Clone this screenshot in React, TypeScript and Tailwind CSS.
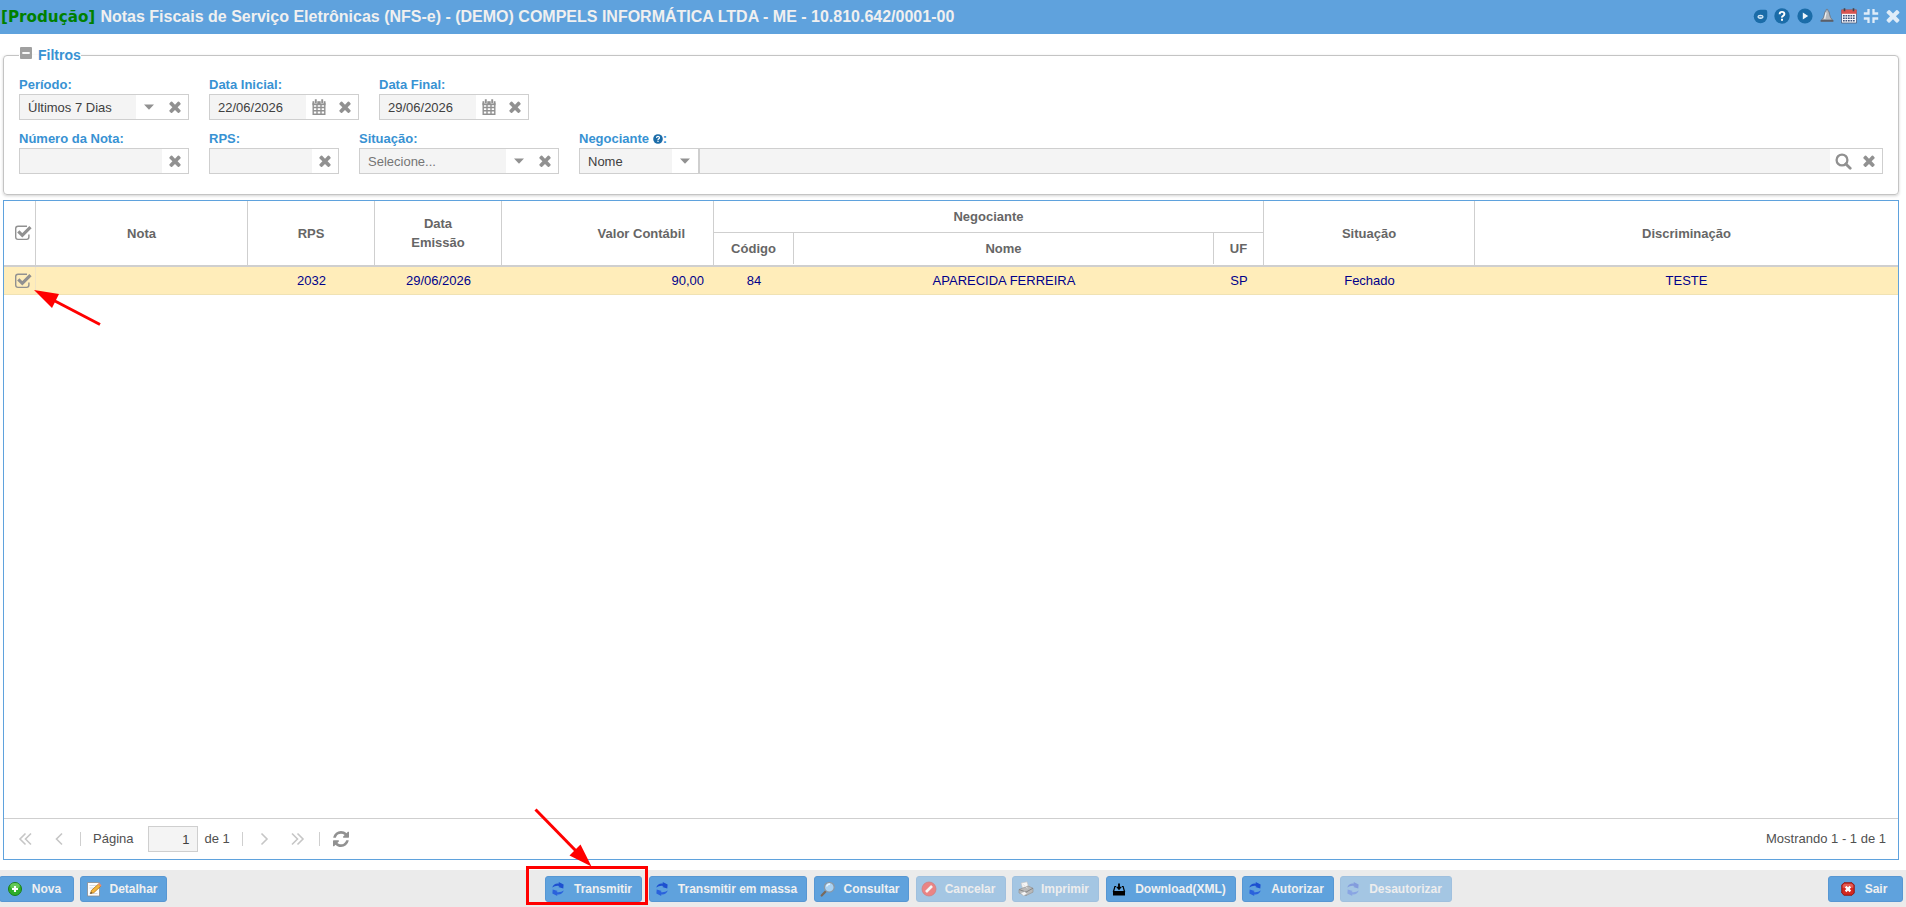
import React from "react";

const Svg = ({ s = 16, vb = "0 0 16 16", c = "", children }: { s?: number; vb?: string; c?: string; children: React.ReactNode }) => (
  <svg width={s} height={s} viewBox={vb} className={"block shrink-0 " + c}>
    {children}
  </svg>
);

const TIMES =
  "M1490 1322q0 40-28 68l-136 136q-28 28-68 28t-68-28l-294-294-294 294q-28 28-68 28t-68-28l-136-136q-28-28-28-68t28-68l294-294-294-294q-28-28-28-68t28-68l136-136q28-28 68-28t68 28l294 294 294-294q28-28 68-28t68 28l136 136q28 28 28 68t-28 68l-294 294 294 294q28 28 28 68z";

const Times = ({ s = 16, c = "text-[#919191]" }: { s?: number; c?: string }) => (
  <Svg s={s} vb="64 96 1664 1664" c={c}>
    <path fill="currentColor" d={TIMES} />
  </Svg>
);

const Caret = () => (
  <Svg c="text-[#919191]">
    <path fill="currentColor" d="M3 5.600h10L8 10.800z" />
  </Svg>
);

const Calendar = () => (
  <Svg c="text-[#919191]">
    <path d="M2.200 4.500h11.600v10.700H2.200zM2 8.500h12M2 11.800h12M6 6v9M10 6v9" fill="none" stroke="currentColor" strokeWidth="1.400" />
    <path d="M1.500 2.200h13v4h-13z" fill="currentColor" />
    <path d="M4.800 0v4.600M11.200 0v4.600" stroke="#fff" strokeWidth="3" />
    <path d="M4.800 .2v4M11.200 .2v4" stroke="currentColor" strokeWidth="1.900" />
  </Svg>
);

const Search = () => (
  <Svg s={17} vb="0 0 17 17" c="text-[#919191]">
    <circle cx="7" cy="7" r="5.400" fill="none" stroke="currentColor" strokeWidth="2.300" />
    <path d="M10.900 10.900l4.300 4.300" stroke="currentColor" strokeWidth="2.800" strokeLinecap="round" />
  </Svg>
);

const Check = () => (
  <Svg s={18} vb="0 0 18 18" c="text-[#919191] translate-x-[3px]">
    <path d="M13 2.200H4Q1.700 2.200 1.700 4.500v8.600q0 2.300 2.300 2.300h8.600q2.300 0 2.300-2.300v-2.700" fill="none" stroke="currentColor" strokeWidth="1.400" />
    <path d="M4.300 7.400l4 3.900 8.200-8.200" fill="none" stroke="currentColor" strokeWidth="3.200" />
  </Svg>
);

const Box = ({ text = "", muted = false, icons, c = "" }: { text?: string; muted?: boolean; icons: React.ReactNode[]; c?: string }) => (
  <div className={"flex h-[26px] border border-[#cfcfcf] bg-white " + c}>
    <div className={"flex min-w-0 flex-1 items-center bg-[#f4f4f4] pl-2 pt-px text-[13px] " + (muted ? "text-[#757575]" : "text-[#404040]")}>{text}</div>
    {icons.map((ic, i) => (
      <div key={i} className="flex w-[26px] items-center justify-center">
        {ic}
      </div>
    ))}
  </div>
);

const Field = ({ label, width, text = "", muted = false, icons }: { label: React.ReactNode; width: string; text?: string; muted?: boolean; icons: React.ReactNode[] }) => (
  <div className={"flex flex-col " + width}>
    <label className="flex h-5 items-center pt-[2px] text-[13px] font-bold text-[#3892d3]">{label}</label>
    <Box text={text} muted={muted} icons={icons} />
  </div>
);

const Sync = () => (
  <Svg s={16} c="-ml-px">
    <path d="M2.200 6.400Q4 1.900 8.900 2.500L8.700.9l4.900 2.500-.3 4-5-1.400 1.300-1.100Q5.500 4 2.200 6.400z" fill="#1d50d0" />
    <path d="M13.800 9.600Q12 14.100 7.100 13.500l.2 1.600-4.900-2.500.3-4 5 1.400-1.300 1.100Q10.500 12 13.800 9.600z" fill="#2a62dc" />
  </Svg>
);

const Plus = () => (
  <Svg s={16}>
    <circle cx="8" cy="8" r="6.500" fill="#2fae28" stroke="#1b7d1a" />
    <ellipse cx="8" cy="5" rx="4.800" ry="3" fill="#8ada78" opacity=".6" />
    <path d="M8 5v6M5 8h6" stroke="#fff" strokeWidth="2.100" />
  </Svg>
);

const Edit = () => (
  <Svg s={16}>
    <path d="M1.500 1.500h12v13.500h-12z" fill="#fdfdfd" stroke="#8c8c8c" strokeWidth=".8" />
    <path d="M3.500 4.500h7M3.500 7h5M3.500 12.500h8" stroke="#c9d3de" strokeWidth=".8" />
    <path d="M4.500 12.500l1-3.200L12.500 3l2.300 2.200-7 6.500z" fill="#f5b73c" stroke="#b5751a" strokeWidth=".8" />
    <path d="M12 3.200l1.200-1.100 2.400 2.200-1.200 1.200z" fill="#e88b76" />
    <path d="M4.300 12.800l.6-1.700 1.300 1z" fill="#333" />
  </Svg>
);

const Lens = () => (
  <Svg s={16}>
    <path d="M6 10L1.700 14.500" stroke="#7a6a5c" strokeWidth="2.200" strokeLinecap="round" />
    <circle cx="9.300" cy="6.200" r="4.900" fill="#a9d2f3" stroke="#8b98a5" strokeWidth="1.300" />
    <path d="M6.500 5.500Q7.500 3 10 3" stroke="#e8f5ff" strokeWidth="1.300" fill="none" />
  </Svg>
);

const Forbid = () => (
  <Svg s={16} c="-ml-px">
    <circle cx="8" cy="8" r="7" fill="#ec1f1f" stroke="#b11b1b" strokeWidth=".8" />
    <path d="M5 11l6-6" stroke="#fff" strokeWidth="2.600" />
  </Svg>
);

const Printer = () => (
  <Svg s={16}>
    <path d="M3 2l6-1.200 2 6.200-6 2z" fill="#fff" stroke="#999" strokeWidth=".6" />
    <path d="M1 8.500L10 5l5 2.200v4L8 14.500 1 12z" fill="#888" stroke="#444" strokeWidth=".7" />
    <path d="M1 8.500l7 2.600 7-3.900M8 11.100v3.400" stroke="#222" fill="none" />
    <path d="M2.500 12l4-1.500 3 2.300-4 2z" fill="#fff" stroke="#777" strokeWidth=".5" />
    <path d="M4.500 3l5 4" stroke="#ddd" />
  </Svg>
);

const Download = () => (
  <Svg s={16} c="-ml-px">
    <path d="M5 5.500H3.900L2.500 10.500h11L12.100 5.500H11" fill="none" stroke="#000" strokeWidth="1.200" />
    <path d="M2 10.500h12v4H2z" fill="#000" />
    <path d="M7.100 2.500h1.800v3.200h2.100L8 9.200 5 5.700h2.100z" fill="#000" />
  </Svg>
);

const Exit = () => (
  <Svg s={16}>
    <path d="M4 1.800h8l2.200 2.200v8L12 14.200H4L1.800 12V4z" fill="#d5281f" stroke="#8f1511" strokeLinejoin="round" />
    <path d="M4.300 2.700h7.400l1.600 1.600v2.400H2.700V4.300z" fill="#f0857c" opacity=".55" />
    <path d="M5.600 5.600l4.800 4.800M10.400 5.600l-4.800 4.800" stroke="#fff" strokeWidth="2.200" />
  </Svg>
);

const Btn = ({ icon, label, w, off = false }: { icon: React.ReactNode; label: string; w: string; off?: boolean }) => (
  <button className={"flex h-[26px] shrink-0 items-center rounded-[3px] border border-[#5797d3] bg-[#5fa2dd] text-[12px] font-bold text-[#f0f0f0] " + w + (off ? " opacity-50" : "")}>
    {icon}
    <span className="flex-1 whitespace-nowrap pr-px text-center">{label}</span>
  </button>
);

const HelpDot = ({ s }: { s: number }) => (
  <Svg s={s}>
    <circle cx="8" cy="8" r="7.700" fill="#1b6ca8" />
    <path d="M5.600 6.200Q5.700 3.900 8 3.900t2.400 2q0 1.200-1.300 1.900T8 9.700" fill="none" stroke="#fff" strokeWidth="1.900" />
    <path d="M7 10.800h2v2H7z" fill="#fff" />
  </Svg>
);

const HeaderIcons = () => (
  <div className="flex items-center pr-[2px]">
    {[
      <Svg s={15} key="a">
        <path d="M8 .8h5.200q2 0 2 2V8A7.200 7.200 0 1 1 8 .8z" fill="#1b6ca8" />
        <ellipse cx="8" cy="8.300" rx="3.200" ry="2.300" fill="#dcecf8" />
        <path d="M6.200 8.300h3.600" stroke="#1b6ca8" strokeWidth="1" />
      </Svg>,
      <HelpDot key="b" s={16} />,
      <Svg key="c">
        <circle cx="8" cy="8" r="7.600" fill="#1b6ca8" />
        <path d="M5.800 4.600L11.200 8l-5.400 3.400z" fill="#f0f6fb" />
      </Svg>,
      <Svg key="d">
        <path d="M8 1.200q1 0 1 1.300 1.200.8 1.600 4 .4 3.200 2.800 5.500H2.600q2.400-2.300 2.800-5.500.4-3.200 1.600-4 0-1.300 1-1.300z" fill="#b5bac1" stroke="#6b6f78" strokeWidth=".8" />
        <path d="M7.100 4.500q-.8 3-1.400 6.300" stroke="#f2f2f2" strokeWidth="1.200" fill="none" />
        <path d="M1.600 12h12.800v1.800H1.600z" fill="#5c5f68" />
      </Svg>,
      <Svg key="e">
        <path d="M.5 2h15v13H.5z" fill="#f7f7fb" stroke="#4a5a7c" strokeWidth=".8" />
        <path d="M.4 1.600h15.200v4.200H.4z" fill="#d9534f" />
        <path d="M3.500 .2v3M12.500 .2v3" stroke="#444" strokeWidth="1.600" />
        <path d="M2 7.800h12M2 10.200h12M2 12.700h12" stroke="#40547c" strokeWidth="1.500" strokeDasharray="1.700 .8" />
      </Svg>,
      <Svg key="f">
        <path d="M5.500 1v4.500H.8M10.500 1v4.500h4.700M5.500 15v-4.500H.8M10.500 15v-4.500h4.700" fill="none" stroke="#dfecf8" strokeWidth="2.300" />
      </Svg>,
      <Times key="g" s={18} c="text-[#dfecf8]" />,
    ].map((x, i) => (
      <div key={i} className="flex w-[22.1px] items-center justify-center">
        {x}
      </div>
    ))}
  </div>
);

const Th = ({ w, children, c = "justify-center" }: { w: string; children?: React.ReactNode; c?: string }) => (
  <div className={"flex shrink-0 items-center border-r border-[#cfcfcf] text-center " + w + " " + c}>{children}</div>
);
const Td = ({ w, children, c = "justify-center" }: { w: string; children?: React.ReactNode; c?: string }) => (
  <div className={"flex shrink-0 items-center whitespace-nowrap " + w + " " + c}>{children}</div>
);

const Chevron = ({ d }: { d: string }) => (
  <Svg c="text-[#c6c6c6]">
    <path d={d} fill="none" stroke="currentColor" strokeWidth="1.600" />
  </Svg>
);

export default function App() {
  return (
    <div className="relative flex h-[907px] w-[1906px] flex-col overflow-hidden bg-white font-['Liberation_Sans',Arial,sans-serif] text-[13px]">
      <header className="flex h-[34px] shrink-0 items-center justify-between bg-[#5fa2dd] pb-[2px] pl-px">
        <h1 className="flex items-baseline whitespace-pre pt-px text-[16px] font-bold leading-[22px] text-[#f0f0f0]">
          <span className="w-[95px] font-['DejaVu_Sans',sans-serif] text-[15.2px] text-[#008000]">[Produção]</span>
          <span> Notas Fiscais de Serviço Eletrônicas (NFS-e) - (DEMO) COMPELS INFORMÁTICA LTDA - ME - 10.810.642/0001-00</span>
        </h1>
        <HeaderIcons />
      </header>

      <fieldset className="ml-[3px] mt-[12px] h-[149px] w-[1896px] shrink-0 rounded-[4px] border border-[#c4c4c4] px-[15px] shadow-[0_1px_3px_rgba(0,0,0,0.18)]">
        <legend className="flex h-[18px] items-center gap-[6px] pl-px pt-px text-[14px] font-bold text-[#3892d3]">
          <Svg s={12} vb="0 0 13 13" c="-mt-[5px]">
            <rect width="13" height="13" rx="1" fill="#a0a0a0" />
            <rect x="2.500" y="5.500" width="8" height="2" fill="#fff" />
          </Svg>
          Filtros
        </legend>
        <div className="mt-[10px] flex gap-5">
          <Field label="Período:" width="w-[170px]" text="Últimos 7 Dias" icons={[<Caret />, <Times />]} />
          <Field label="Data Inicial:" width="w-[150px]" text="22/06/2026" icons={[<Calendar />, <Times />]} />
          <Field label="Data Final:" width="w-[150px]" text="29/06/2026" icons={[<Calendar />, <Times />]} />
        </div>
        <div className="mt-2 flex gap-5">
          <Field label="Número da Nota:" width="w-[170px]" icons={[<Times />]} />
          <Field label="RPS:" width="w-[130px]" icons={[<Times />]} />
          <Field label="Situação:" width="w-[200px]" text="Selecione..." muted icons={[<Caret />, <Times />]} />
          <div className="flex flex-col">
            <label className="flex h-5 items-center pt-[2px] text-[13px] font-bold text-[#3892d3]">
              Negociante&nbsp;
              <HelpDot s={10} />:
            </label>
            <div className="flex">
              <Box c="w-[120px]" text="Nome" icons={[<Caret />]} />
              <Box c="w-[1184px]" icons={[<Search />, <Times />]} />
            </div>
          </div>
        </div>
      </fieldset>

      <section className="ml-[3px] mt-[5px] flex h-[660px] w-[1896px] shrink-0 flex-col border border-[#5fa2dd]">
        <div className="flex h-[66px] shrink-0 border-b-2 border-[#cfcfcf] font-bold leading-[19px] text-[#666]">
          <Th w="w-[32px]"><Check /></Th>
          <Th w="w-[212px]">Nota</Th>
          <Th w="w-[127px]">RPS</Th>
          <Th w="w-[127px]">Data<br />Emissão</Th>
          <Th w="w-[212px]" c="justify-end pr-[28px]">Valor Contábil</Th>
          <div className="flex w-[550px] shrink-0 flex-col border-r border-[#cfcfcf]">
            <div className="flex h-8 items-center justify-center border-b border-[#cfcfcf]">Negociante</div>
            <div className="flex h-[31px]">
              <Th w="w-[80px]">Código</Th>
              <Th w="w-[420px]">Nome</Th>
              <div className="flex flex-1 items-center justify-center">UF</div>
            </div>
          </div>
          <Th w="w-[211px]">Situação</Th>
          <div className="flex flex-1 items-center justify-center">Discriminação</div>
        </div>
        <div className="flex h-[28px] shrink-0 border-b border-[#f0e2b4] bg-[#ffedba] text-[#00008b]">
          <Td w="w-[32px]" c="justify-center border-r border-[#f1e4c4]"><Check /></Td>
          <Td w="w-[212px]" />
          <Td w="w-[127px]">2032</Td>
          <Td w="w-[127px]">29/06/2026</Td>
          <Td w="w-[212px]" c="justify-end pr-[10px]">90,00</Td>
          <Td w="w-[80px]">84</Td>
          <Td w="w-[420px]">APARECIDA FERREIRA</Td>
          <Td w="w-[50px]">SP</Td>
          <Td w="w-[211px]">Fechado</Td>
          <Td w="w-[423px]">TESTE</Td>
        </div>
        <div className="flex-1" />
        <div className="flex h-[41px] shrink-0 items-center border-t border-[#cfcfcf] px-[13px] text-[#505050]">
          <Chevron d="M8.500 2.500L3 8l5.500 5.500M14 2.500L8.500 8l5.500 5.500" />
          <div className="ml-[18px]"><Chevron d="M11 2.500L5.500 8l5.500 5.500" /></div>
          <div className="ml-[13px] h-[14px] w-px bg-[#cfcfcf]" />
          <span className="ml-3">Página</span>
          <div className="ml-[15px] flex h-[26px] w-[50px] items-center justify-end border border-[#cfcfcf] bg-[#f4f4f4] pr-[8px] pt-px text-[#404040]">1</div>
          <span className="ml-[6px]">de 1</span>
          <div className="ml-[12px] h-[14px] w-px bg-[#cfcfcf]" />
          <div className="ml-[13px]"><Chevron d="M5.500 2.500L11 8l-5.500 5.500" /></div>
          <div className="ml-[17px]"><Chevron d="M3 2.500L8.500 8 3 13.500M8.500 2.500L14 8l-5.500 5.500" /></div>
          <div className="ml-[14px] h-[14px] w-px bg-[#cfcfcf]" />
          <svg width="16" height="16" viewBox="0 0 1536 1536" className="ml-[13px] block text-[#919191]">
            <path fill="currentColor" d="M1511 928q0 5-1 7-64 268-268 434.500T764 1536q-146 0-282.500-55T238 1324l-129 129q-19 19-45 19t-45-19-19-45V960q0-26 19-45t45-19h448q26 0 45 19t19 45-19 45l-137 137q71 66 161 102t187 36q134 0 250-65t186-179q11-17 53-117 8-23 30-23h192q13 0 22.500 9.500t9.500 22.500zm25-800v448q0 26-19 45t-45 19h-448q-26 0-45-19t-19-45 19-45l138-138Q969 256 768 256q-134 0-250 65T332 500q-11 17-53 117-8 23-30 23H50q-13 0-22.500-9.500T18 608v-7q65-268 270-434.500T768 0q146 0 284 55.500T1297 212l130-129q19-19 45-19t45 19 19 45z" />
          </svg>
          <span className="ml-auto mr-[-1px]">Mostrando 1 - 1 de 1</span>
        </div>
      </section>

      <footer className="mt-[10px] flex h-[37px] shrink-0 bg-[#ebebeb] pt-[6px]">
        <div className="flex gap-[6px]">
          <Btn w="-ml-px w-[75px] pl-[7px] pr-[2px]" icon={<Plus />} label="Nova" />
          <Btn w="w-[87px] pl-[5px]" icon={<Edit />} label="Detalhar" />
        </div>
        <div className="ml-[378px] flex gap-[6px]">
          <Btn w="mr-px w-[97px] pl-[5px]" icon={<Sync />} label="Transmitir" />
          <Btn w="mr-px w-[158px] pl-[5px]" icon={<Sync />} label="Transmitir em massa" />
          <Btn w="mr-px w-[95px] pl-[5px]" icon={<Lens />} label="Consultar" />
          <Btn w="w-[90px] pl-[5px] pr-px" off icon={<Forbid />} label="Cancelar" />
          <Btn w="mr-px w-[87px] pl-[5px] pr-px" off icon={<Printer />} label="Imprimir" />
          <Btn w="w-[130px] pl-[5px]" icon={<Download />} label="Download(XML)" />
          <Btn w="w-[92px] pl-[5px]" icon={<Sync />} label="Autorizar" />
          <Btn w="w-[112px] pl-[5px]" off icon={<Sync />} label="Desautorizar" />
        </div>
        <div className="ml-auto mr-[3px]">
          <Btn w="w-[75px] pl-[11px] pr-[5px]" icon={<Exit />} label="Sair" />
        </div>
      </footer>

      <svg className="pointer-events-none absolute left-[34px] top-[288px]" width="70" height="40">
        <path d="M66 36.500L20 12.500" stroke="#f00" strokeWidth="3" />
        <path d="M0 2l25 4-7 14z" fill="#f00" />
      </svg>
      <svg className="pointer-events-none absolute left-[530px] top-[805px]" width="65" height="65">
        <path d="M5.500 4.500L48 48" stroke="#f00" strokeWidth="3" />
        <path d="M61.500 61.500L39.500 50.500l11-11z" fill="#f00" />
      </svg>
      <div className="pointer-events-none absolute left-[526px] top-[866px] h-[39px] w-[122px] border-[3px] border-[#f00]" />
    </div>
  );
}
